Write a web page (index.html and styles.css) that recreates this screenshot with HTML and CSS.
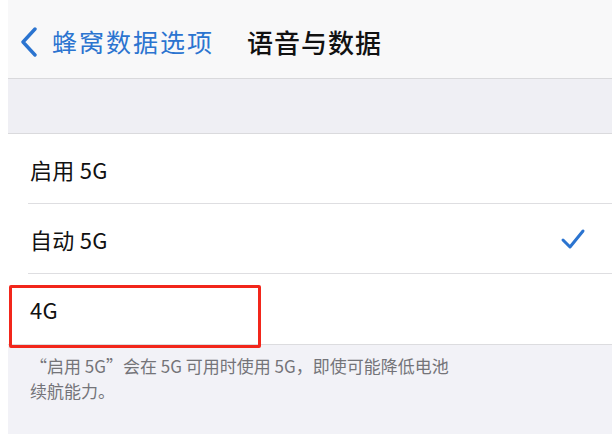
FILE: index.html
```html
<!DOCTYPE html>
<html lang="zh-CN">
<head>
<meta charset="utf-8">
<title>语音与数据</title>
<link rel="stylesheet" href="styles.css">
</head>
<body>
<div class="screen">
  <header class="nav">
    <a class="back">
      <svg class="chevron" width="20" height="30" viewBox="0 0 20 30"><path d="M15 2 L3 15 L15 28" fill="none" stroke="#2b74d0" stroke-width="3.4" stroke-linecap="round" stroke-linejoin="round"/></svg>
      <span class="back-label">蜂窝数据选项</span>
    </a>
    <h1 class="title">语音与数据</h1>
  </header>
  <div class="spacer"></div>
  <ul class="list">
    <li class="row">启用 5G</li>
    <li class="row">自动 5G
      <svg class="check" width="26" height="24" viewBox="0 0 26 24"><path d="M3 13 L10 20 L23 4" fill="none" stroke="#2b74d0" stroke-width="3" stroke-linecap="round" stroke-linejoin="round"/></svg>
    </li>
    <li class="row row-last">4G<span class="mark"></span></li>
  </ul>
  <p class="footer">“启用 5G”会在 5G 可用时使用 5G，即使可能降低电池续航能力。</p>
  <p class="footer footer-next">“自动 5G”仅在不会明显降低电池续航能力时使用 5G。</p>
</div>
</body>
</html>
```

FILE: styles.css
```css
html, body {
  margin: 0;
  padding: 0;
  background: #ffffff;
  overflow: hidden;
}
body {
  width: 612px;
  height: 434px;
  font-family: "Noto Sans CJK SC", "Liberation Sans", sans-serif;
}
.screen {
  margin-left: 8px;
  width: 604px;
  height: 434px;
  background: #f2f2f7;
  overflow: hidden;
}
.nav {
  box-sizing: border-box;
  height: 79px;
  padding-top: 4px;
  background: #f8f8f9;
  border-bottom: 1px solid #d9d9dc;
  display: flex;
  align-items: center;
  padding-left: 12px;
}
.back {
  display: flex;
  align-items: center;
  color: #2b74d0;
  font-size: 25px;
  letter-spacing: 2px;
}
.chevron {
  display: block;
  margin-top: 1px;
}
.back-label {
  margin-left: 12px;
}
.title {
  margin: 0 0 0 33px;
  font-size: 26px;
  font-weight: 500;
  color: #111111;
  letter-spacing: 1px;
}
.spacer {
  height: 54px;
  background: #efeff4;
  border-bottom: 1px solid #dadadd;
}
.list {
  list-style: none;
  margin: 0;
  padding: 0;
  background: #ffffff;
  border-bottom: 1px solid #dcdcdf;
}
.row {
  position: relative;
  height: 70px;
  display: flex;
  align-items: center;
  justify-content: space-between;
  padding: 0 26px 0 22px;
  font-size: 22px;
  color: #111111;
  letter-spacing: 0.3px;
}
.row::after {
  content: "";
  position: absolute;
  left: 20px;
  right: 0;
  bottom: 0;
  height: 1px;
  background: #dedee1;
}
.row-last::after {
  display: none;
}
.check {
  display: block;
}
.mark {
  position: absolute;
  left: 1px;
  top: 11px;
  width: 246px;
  height: 57px;
  border: 3px solid #f2261b;
  border-radius: 2px;
  z-index: 1;
}
.footer {
  margin: 0;
  padding: 8px 150px 0 22px;
  font-size: 17px;
  line-height: 25px;
  color: #747479;
}
.footer-next {
  padding-top: 28px;
}
```
